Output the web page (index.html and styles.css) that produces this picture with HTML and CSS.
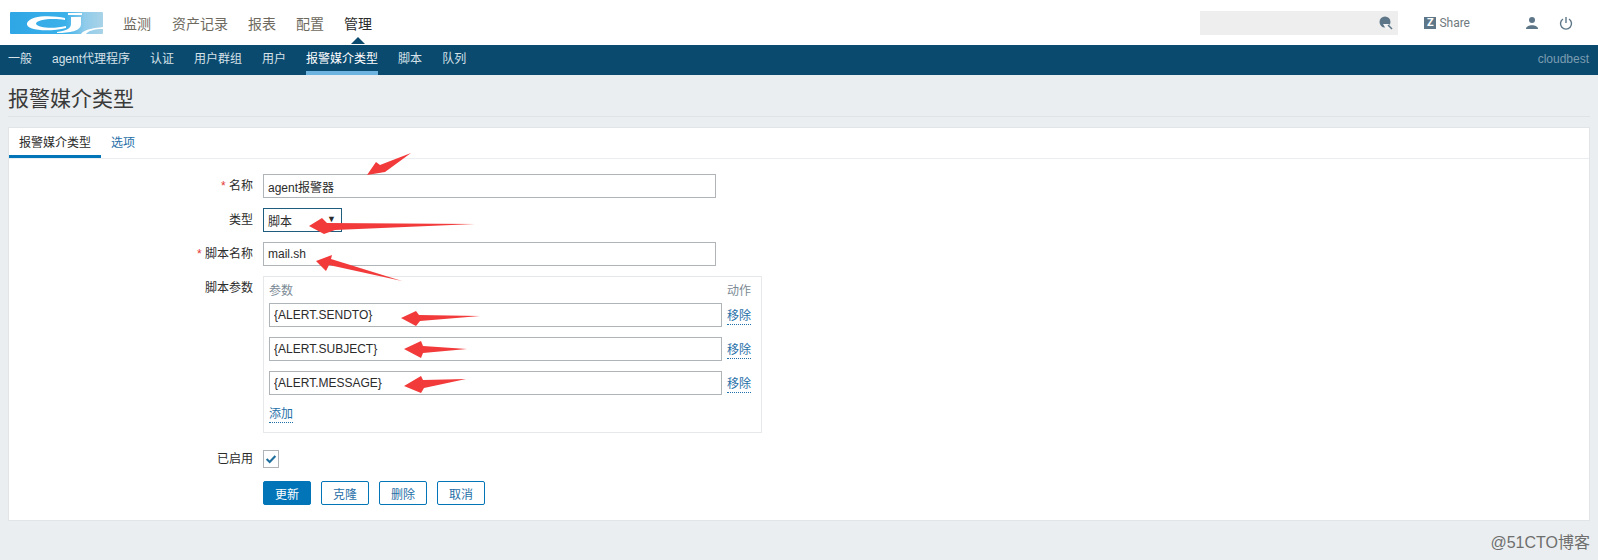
FILE: index.html
```html
<!DOCTYPE html>
<html lang="zh-CN">
<head>
    <meta charset="UTF-8">
    <title>报警媒介类型</title>
    <link rel="stylesheet" href="styles.css">
</head>
<body>
    <!-- 顶部导航 -->
    <header class="top-bar">
        <svg class="logo" viewBox="0 0 93 22" width="93" height="22">
            <defs>
                <linearGradient id="logo-bg" x1="0" x2="1" y1="0" y2="0">
                    <stop offset="0" stop-color="#2fa6e5"/>
                    <stop offset="0.6" stop-color="#3bb1ea"/>
                    <stop offset="0.8" stop-color="#8fcbea"/>
                    <stop offset="1" stop-color="#a9d3e8"/>
                </linearGradient>
            </defs>
            <rect width="93" height="22" rx="1" fill="url(#logo-bg)"/>
            <path d="M55 6 C42 3 20 3 17 11 C15 19 40 20 56 16 L56 14 C44 17 28 16 26 12 C26 7 44 6 55 8 Z" fill="#fff"/>
            <path d="M58 1 H72 V3 H58 Z M61 5 H71 V12 C71 19 60 21 47 21 L47 20 C55 19 61 17 61 12 Z" fill="#fff"/>
            <path d="M71 22 C74 17 86 16 93 15 V17 C84 17 78 19 76 22 Z" fill="#fff"/>
        </svg>
        <nav class="main-nav">
            <a>监测</a>
            <a>资产记录</a>
            <a>报表</a>
            <a>配置</a>
            <a class="selected">管理</a>
        </nav>
        <div class="search-box">
            <svg viewBox="0 0 14 14" width="14" height="14">
                <circle cx="6" cy="6" r="5.5" fill="#5d7688"/>
                <path d="M4 8 H10 L13 13 H7 Z" fill="#f4f4f4"/>
                <path d="M9 9 L13 13" stroke="#5d7688" stroke-width="1.6"/>
            </svg>
        </div>
        <a class="share"><span class="share-z">Z</span>Share</a>
        <svg class="top-icon user-icon" viewBox="0 0 14 14" width="14" height="14">
            <circle cx="7" cy="4" r="3" fill="#5d7688"/>
            <path d="M1 13 C1 8 13 8 13 13 Z" fill="#5d7688"/>
        </svg>
        <svg class="top-icon" viewBox="0 0 14 14" width="14" height="14">
            <path d="M4 3 A5.5 5.5 0 1 0 10 3" fill="none" stroke="#5d7688" stroke-width="1.4"/>
            <path d="M7 1 V7" stroke="#5d7688" stroke-width="1.4"/>
        </svg>
    </header>

    <!-- 二级导航 -->
    <nav class="sub-nav">
        <a>一般</a>
        <a>agent代理程序</a>
        <a>认证</a>
        <a>用户群组</a>
        <a>用户</a>
        <a class="selected">报警媒介类型</a>
        <a>脚本</a>
        <a>队列</a>
        <span class="server-name">cloudbest</span>
    </nav>

    <main class="content">
        <h1 class="page-title">报警媒介类型</h1>
        <div class="card">
            <div class="tabs">
                <a class="tab selected">报警媒介类型</a>
                <a class="tab">选项</a>
            </div>
            <form class="form-list">
                <label class="form-label"><span class="required">*</span> 名称</label>
                <input class="text-field wide" value="agent报警器">

                <label class="form-label">类型</label>
                <div class="select-field">脚本<span class="select-arrow">▼</span></div>

                <label class="form-label"><span class="required">*</span> 脚本名称</label>
                <input class="text-field wide" value="mail.sh">

                <label class="form-label">脚本参数</label>
                <div class="param-table">
                    <div class="param-head"><span>参数</span><span>动作</span></div>
                    <div class="param-row">
                        <input class="text-field param-input" value="{ALERT.SENDTO}">
                        <a class="dotted-link">移除</a>
                    </div>
                    <div class="param-row">
                        <input class="text-field param-input" value="{ALERT.SUBJECT}">
                        <a class="dotted-link">移除</a>
                    </div>
                    <div class="param-row">
                        <input class="text-field param-input" value="{ALERT.MESSAGE}">
                        <a class="dotted-link">移除</a>
                    </div>
                    <a class="dotted-link add-link">添加</a>
                </div>

                <label class="form-label enabled-label">已启用</label>
                <div class="checkbox-box">
                    <svg viewBox="0 0 16 16" width="14" height="14">
                        <path d="M3 8 L6.5 11.5 L13 4.5" fill="none" stroke="#1f6f9f" stroke-width="2.4"/>
                    </svg>
                </div>

                <div class="buttons">
                    <button type="button" class="btn primary">更新</button>
                    <button type="button" class="btn">克隆</button>
                    <button type="button" class="btn">删除</button>
                    <button type="button" class="btn">取消</button>
                </div>
            </form>
        </div>
    </main>
    <div class="watermark">@51CTO博客</div>

    <!-- 截图上的红色箭头 -->
    <svg class="arrows" viewBox="0 0 1598 560" width="1598" height="560">
        <polygon points="367,175 376,162 380,165 411,153 385,172"/>
        <polygon points="309,226 322,218 327,223 475,224 335,230 324,234"/>
        <polygon points="316,261 332,255 331,259 402,281 329,265 326,271"/>
        <polygon points="401,318 416,311 419,315 480,316 420,321 416,326"/>
        <polygon points="404,349 421,341 423,346 467,349 423,353 421,358"/>
        <polygon points="404,386 421,376 423,380 466,379 424,388 421,393"/>
    </svg>
</body>
</html>
```

FILE: styles.css
```css
body {
    margin: 0;
    height: 560px;
    overflow: hidden;
    position: relative;
    background-color: #ebeef0;
    color: #2b2b2b;
    font-family: "Liberation Sans", "Noto Sans CJK SC", sans-serif;
    font-size: 12px;
}

/* 顶部导航 */
.top-bar {
    height: 45px;
    background-color: #fff;
    display: flex;
    align-items: center;
    padding: 0 25px 0 10px;
    box-sizing: border-box;
}
.logo {
    margin-right: 20px;
}
.main-nav {
    display: flex;
    gap: 20px;
    flex: 1;
    font-size: 14px;
    color: #6e6a60;
}
.main-nav a:first-child {
    margin-right: 1px;
}
.main-nav a.selected {
    color: #2b2b2b;
    position: relative;
}
.main-nav a.selected::after {
    content: "";
    position: absolute;
    left: 7px;
    top: 24px;
    border-left: 7px solid transparent;
    border-right: 7px solid transparent;
    border-bottom: 7px solid #0b4a6f;
}
.search-box {
    width: 198px;
    height: 24px;
    background-color: #eee;
    display: flex;
    align-items: center;
    justify-content: flex-end;
    padding-right: 5px;
    box-sizing: border-box;
}
.share {
    display: flex;
    align-items: center;
    margin-left: 26px;
    margin-right: 55px;
    color: #6f7a80;
    font-family: Roboto, "Liberation Sans", sans-serif;
}
.share-z {
    width: 12px;
    height: 12px;
    line-height: 12px;
    margin-right: 3px;
    background-color: #5d7688;
    color: #fff;
    font-size: 11px;
    font-weight: bold;
    text-align: center;
}
.user-icon {
    margin-right: 20px;
}

/* 二级导航 */
.sub-nav {
    height: 30px;
    background-color: #0b4a6f;
    display: flex;
    align-items: stretch;
    line-height: 29px;
    color: #d6e2e9;
}
.sub-nav a {
    padding: 0 10px;
}
.sub-nav a:first-child {
    padding-left: 8px;
}
.sub-nav a.selected {
    color: #fff;
    box-sizing: border-box;
    margin: 0 10px;
    padding: 0;
    border-bottom: 4px solid #6db3e0;
}
.server-name {
    margin-left: auto;
    padding-right: 9px;
    color: #7b9db1;
}

.content {
    padding: 0 8px 0 8px;
}
.page-title {
    margin: 0;
    height: 41px;
    line-height: 48px;
    font-size: 21px;
    font-weight: normal;
    color: #3a3a3a;
    border-bottom: 1px solid #e0e3e5;
}
.card {
    margin-top: 10px;
    height: 394px;
    box-sizing: border-box;
    background-color: #fff;
    border: 1px solid #e2e5e7;
}
.tabs {
    display: flex;
    height: 30px;
    border-bottom: 1px solid #ebeef0;
    line-height: 30px;
}
.tab {
    padding: 0 10px;
    color: #1f6fa8;
}
.tab.selected {
    color: #2b2b2b;
    border-bottom: 3px solid #0275b8;
    height: 27px;
}

/* 表单 */
.form-list {
    display: grid;
    grid-template-columns: 244px 1fr;
    column-gap: 10px;
    row-gap: 10px;
    margin-top: 15px;
    justify-items: start;
}
.form-label {
    justify-self: end;
    height: 24px;
    line-height: 25px;
}
.required {
    color: #e33734;
}
.text-field {
    height: 24px;
    box-sizing: border-box;
    border: 1px solid #aeb4b8;
    padding: 0 4px;
    font-family: inherit;
    font-size: 12px;
    color: #2b2b2b;
}
.wide {
    width: 453px;
}
.select-field {
    width: 79px;
    height: 24px;
    box-sizing: border-box;
    border: 1px solid #1f5c7d;
    padding: 0 4px;
    line-height: 26px;
    position: relative;
}
.select-arrow {
    position: absolute;
    right: 5px;
    top: -3px;
    font-size: 9px;
}
.param-table {
    width: 499px;
    height: 157px;
    box-sizing: border-box;
    border: 1px solid #e6e8ea;
    padding: 5px;
}
.param-head {
    display: flex;
    justify-content: space-between;
    width: 482px;
    height: 21px;
    line-height: 18px;
    color: #7b8a94;
}
.param-row {
    display: flex;
    gap: 5px;
    height: 24px;
    margin-bottom: 10px;
}
.param-input {
    width: 453px;
}
.param-row .dotted-link {
    align-self: flex-start;
    margin-top: 6px;
}
.dotted-link {
    color: #1f6fa8;
    border-bottom: 1px dotted #1f6fa8;
    line-height: 15px;
}
.add-link {
    display: inline-block;
    margin-top: 2px;
}
.enabled-label {
    margin-top: 7px;
    height: 18px;
    line-height: 18px;
}
.checkbox-box {
    width: 16px;
    height: 18px;
    margin-top: 7px;
    box-sizing: border-box;
    border: 1px solid #aeb4b8;
    display: flex;
    align-items: center;
    justify-content: center;
}
.buttons {
    grid-column: 2;
    display: flex;
    gap: 10px;
    margin-top: 3px;
}
.btn {
    width: 48px;
    height: 24px;
    padding: 0;
    box-sizing: border-box;
    background-color: #fff;
    border: 1px solid #0275b8;
    border-radius: 2px;
    color: #1f6fa8;
    font-family: inherit;
    font-size: 12px;
}
.btn.primary {
    background-color: #0275b8;
    color: #fff;
}

.watermark {
    position: absolute;
    right: 8px;
    bottom: 7px;
    font-size: 16px;
    color: #6e6e6e;
}
.arrows {
    position: absolute;
    left: 0;
    top: 0;
    fill: #f23a3a;
}
```
